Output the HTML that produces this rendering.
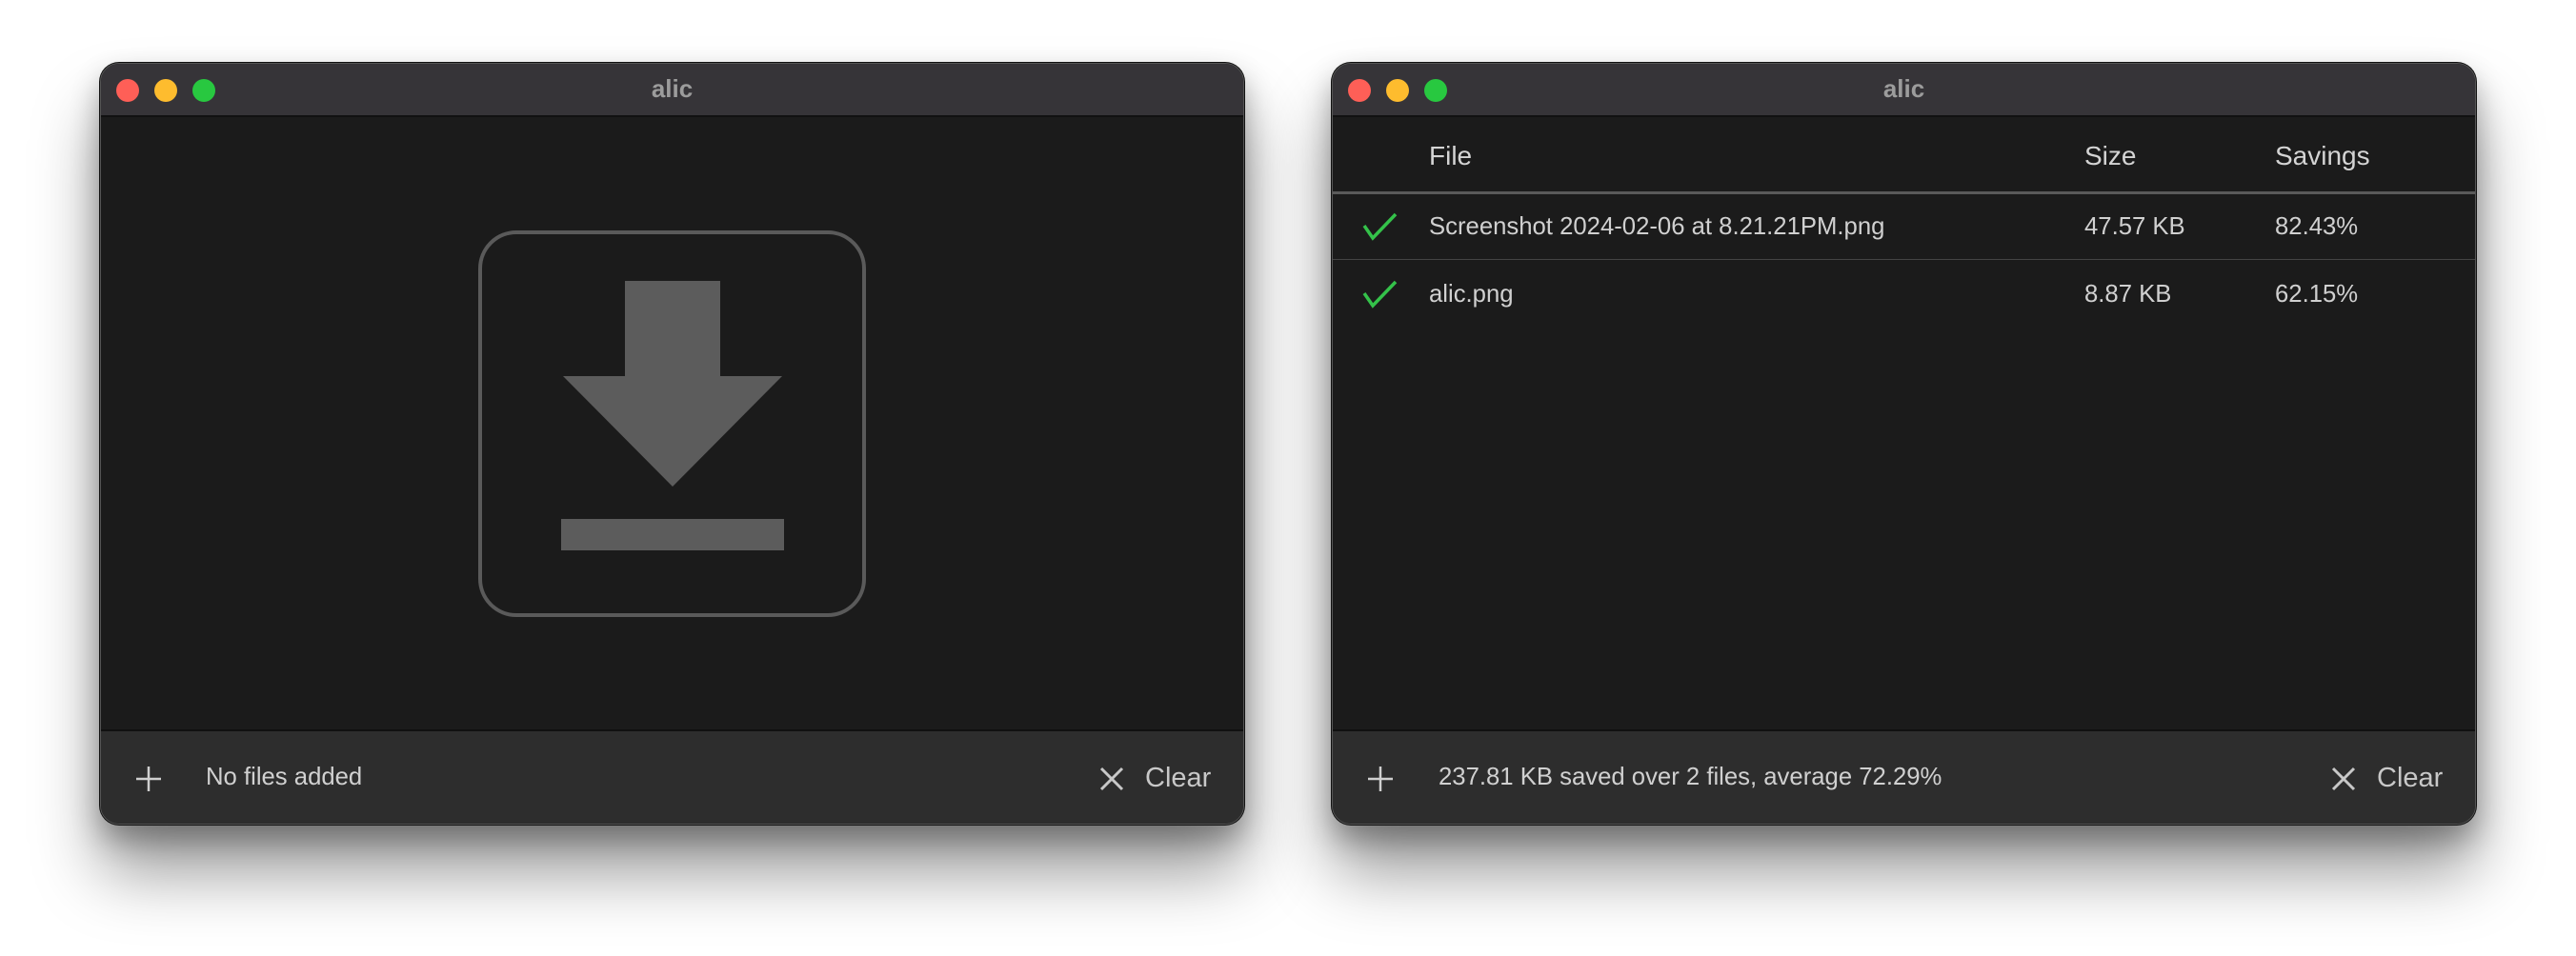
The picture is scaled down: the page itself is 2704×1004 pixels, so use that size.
<!DOCTYPE html>
<html><head><meta charset="utf-8"><style>
*{margin:0;padding:0;box-sizing:border-box}
body{width:2704px;height:1004px;background:#fff;position:relative;overflow:hidden;font-family:"Liberation Sans",sans-serif}
.win{position:absolute;top:66px;width:1201px;height:800px;border-radius:20px;background:#1b1b1b;overflow:hidden;border:1px solid #555;box-shadow:0 0 0 1px #111,0 50px 70px rgba(0,0,0,0.4),0 15px 30px rgba(0,0,0,0.3)}
.tb{position:absolute;left:0;top:0;right:0;height:56px;background:#363438;border-bottom:2px solid #111}
.dot{position:absolute;top:16px;width:24px;height:24px;border-radius:50%}
.title{position:absolute;left:0;right:0;top:11px;text-align:center;color:#9c9c9c;font-weight:bold;font-size:26px}
.ft{position:absolute;left:0;right:0;bottom:0;height:99px;background:#2d2d2d;border-top:2px solid #101010}
.t{position:absolute;color:#d0d0d0;font-size:25.7px;white-space:nowrap}
.clear{position:absolute;top:33px;color:#c8c8c8;font-size:29px}
.hd{position:absolute;color:#d4d4d4;font-size:28px}
</style></head><body>
<div class="win" style="left:105px">
 <div class="tb"><div class="dot" style="left:16px;background:#fe5f57"></div><div class="dot" style="left:56px;background:#febc2e"></div><div class="dot" style="left:96px;background:#28c840"></div><div class="title">alic</div></div>
 <svg style="position:absolute;left:0;top:0" width="1200" height="800" viewBox="105 66 1200 800">
  <rect x="503" y="243" width="403" height="402" rx="38" fill="none" stroke="#5a5a5a" stroke-width="4"/>
  <path d="M655 294H755V394H820L705 510L590 394H655Z" fill="#5c5c5c"/>
  <rect x="588" y="544" width="234" height="33" fill="#5c5c5c"/>
 </svg>
 <div class="ft">
  <svg style="position:absolute;left:36px;top:36px" width="28" height="28"><path d="M14 1V27M1 14H27" stroke="#cfcfcf" stroke-width="2.5"/></svg>
  <div class="t" style="left:110px;top:34px">No files added</div>
  <svg style="position:absolute;left:1048px;top:37px" width="26" height="26"><path d="M2 2L24 24M24 2L2 24" stroke="#c8c8c8" stroke-width="3"/></svg>
  <div class="clear" style="left:1096px">Clear</div>
 </div>
</div>
<div class="win" style="left:1398px">
 <div class="tb"><div class="dot" style="left:16px;background:#fe5f57"></div><div class="dot" style="left:56px;background:#febc2e"></div><div class="dot" style="left:96px;background:#28c840"></div><div class="title">alic</div></div>
 <div class="hd" style="left:101px;top:81px">File</div>
 <div class="hd" style="left:789px;top:81px">Size</div>
 <div class="hd" style="left:989px;top:81px">Savings</div>
 <div style="position:absolute;left:0;right:0;top:134px;height:3px;background:#5a5a5a"></div>
 <div style="position:absolute;left:0;right:0;top:205px;height:1px;background:#444"></div>
 <svg style="position:absolute;left:30px;top:156px" width="40" height="30"><path d="M3 14L12 27L36 2" fill="none" stroke="#34c24a" stroke-width="3.5"/></svg>
 <svg style="position:absolute;left:30px;top:227px" width="40" height="30"><path d="M3 14L12 27L36 2" fill="none" stroke="#34c24a" stroke-width="3.5"/></svg>
 <div class="t" style="left:101px;top:157px">Screenshot 2024-02-06 at 8.21.21PM.png</div>
 <div class="t" style="left:789px;top:157px">47.57 KB</div>
 <div class="t" style="left:989px;top:157px">82.43%</div>
 <div class="t" style="left:101px;top:228px">alic.png</div>
 <div class="t" style="left:789px;top:228px">8.87 KB</div>
 <div class="t" style="left:989px;top:228px">62.15%</div>
 <div class="ft">
  <svg style="position:absolute;left:36px;top:36px" width="28" height="28"><path d="M14 1V27M1 14H27" stroke="#cfcfcf" stroke-width="2.5"/></svg>
  <div class="t" style="left:111px;top:34px">237.81 KB saved over 2 files, average 72.29%</div>
  <svg style="position:absolute;left:1048px;top:37px" width="26" height="26"><path d="M2 2L24 24M24 2L2 24" stroke="#c8c8c8" stroke-width="3"/></svg>
  <div class="clear" style="left:1096px">Clear</div>
 </div>
</div>
</body></html>
